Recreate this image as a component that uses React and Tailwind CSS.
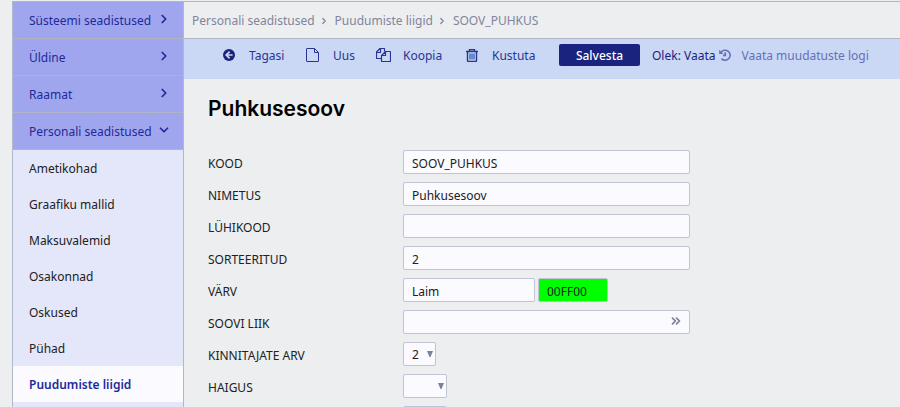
import { useState } from "react";
import { ChevronDown, ChevronRight, ChevronsRight } from "lucide-react";

const groups = [
  { label: "Süsteemi seadistused", open: false },
  { label: "Üldine", open: false },
  { label: "Raamat", open: false },
  { label: "Personali seadistused", open: true },
];

const pages = [
  "Ametikohad",
  "Graafiku mallid",
  "Maksuvalemid",
  "Osakonnad",
  "Oskused",
  "Pühad",
  "Puudumiste liigid",
];

function BackIcon() {
  return (
    <svg viewBox="0 0 12 12" className="w-3 h-3" aria-hidden="true">
      <circle cx="6" cy="6" r="6" fill="#1a237e" />
      <path
        d="M6.600 2.600 3.200 6l3.400 3.400M3.400 6h6.200"
        fill="none"
        stroke="#cad7f5"
        strokeWidth="1.700"
      />
    </svg>
  );
}

function FileIcon() {
  return (
    <svg viewBox="0 0 13 14" className="w-[13px] h-3.5" aria-hidden="true">
      <path
        d="M.5 1Q.5.5 1 .5h7.500l4 4V13q0 .5-.5.5H1q-.5 0-.5-.5zM8.500.5v4h4"
        fill="none"
        stroke="currentColor"
        strokeLinejoin="round"
      />
    </svg>
  );
}

function CopyIcon() {
  return (
    <svg viewBox="0 0 15 14" className="w-[15px] h-3.5" aria-hidden="true">
      <path
        d="M5.500 10.500H1q-.5 0-.5-.5V4L4 .5h4q.5 0 .5.5v2.500M.5 4.500h4v-4"
        fill="none"
        stroke="currentColor"
        strokeWidth="1.200"
        strokeLinejoin="round"
      />
      <path
        d="M9.500 3.500H14q.5 0 .5.5v9q0 .5-.5.5H6q-.5 0-.5-.5V7.500zM5.500 7.500h4v-4"
        fill="none"
        stroke="currentColor"
        strokeWidth="1.200"
        strokeLinejoin="round"
      />
    </svg>
  );
}

function TrashIcon() {
  return (
    <svg viewBox="0 0 12 13" className="w-3 h-[13px]" aria-hidden="true">
      <path
        d="M0 2.500h12M3.500 2.500v-2h5v2M1.500 2.500v9q0 1 1 1h7q1 0 1-1v-9"
        fill="none"
        stroke="currentColor"
        strokeWidth="1.400"
      />
      <path
        d="M4 4.500v6M6 4.500v6M8 4.500v6"
        fill="none"
        stroke="#3d6bb8"
        strokeWidth="1.400"
      />
    </svg>
  );
}

function HistoryIcon() {
  return (
    <svg viewBox="0 0 12 12" className="w-3 h-3" aria-hidden="true">
      <path
        d="M2 3.400A5 5 0 1 1 2.500 9.600M6.300 3.200v3.200H4"
        fill="none"
        stroke="currentColor"
        strokeWidth="1.600"
      />
      <path d="M.2.700v4.300h4.300z" fill="currentColor" />
    </svg>
  );
}

function ToolButton({ icon: Icon, label, className }) {
  return (
    <button className={`flex items-center text-[#283593] ${className}`}>
      <Icon />
      <span className="pt-0.5">{label}</span>
    </button>
  );
}

function Row({ id, label, children }) {
  return (
    <div className="flex items-center h-6">
      <label htmlFor={id} className="w-[195px] pt-1 shrink-0 text-[#212121]">
        {label}
      </label>
      {children}
    </div>
  );
}

const fieldStyle =
  "h-6 px-2 pt-0.5 bg-[#fafaff] border border-[#c0c4d4] rounded-xs text-[#212121] outline-none";

function TextField({ id, label, value }) {
  return (
    <Row id={id} label={label}>
      <input id={id} defaultValue={value} className={`w-[287px] ${fieldStyle}`} />
    </Row>
  );
}

function Select({ id, value, options, width, ariaLabel }) {
  return (
    <div className={`relative ${width}`}>
      <select
        id={id}
        aria-label={ariaLabel}
        defaultValue={value}
        className={`block w-full appearance-none ${fieldStyle}`}
      >
        {options.map((option) => (
          <option key={option}>{option}</option>
        ))}
      </select>
      <svg
        viewBox="0 0 6 6"
        className="absolute right-[3px] top-[9px] w-1.5 h-1.5 pointer-events-none"
        aria-hidden="true"
      >
        <path d="M0 0h6L3.500 6h-1z" fill="#7c819c" />
      </svg>
    </div>
  );
}

export default function App() {
  const [activePage, setActivePage] = useState("Puudumiste liigid");

  return (
    <div className="flex h-screen overflow-hidden pl-3 pt-px bg-[#edeef0] text-xs font-['Noto_Sans',sans-serif]">
      {/* Sidebar */}
      <nav className="w-[172px] shrink-0 border-x border-[#b0b8cc] bg-[#e4e7fa]">
        {groups.map((group) => (
          <button
            key={group.label}
            aria-expanded={group.open}
            className="flex items-center justify-between w-full h-[37px] pl-4 pr-3 border-t border-[#b0b4c6] bg-[#a0a6ee] text-[#1f2a9a] whitespace-nowrap"
          >
            <span className="pt-0.5">{group.label}</span>
            {group.open ? (
              <ChevronDown className="w-3.5 h-3.5 -ml-2 mb-0.5 shrink-0" strokeWidth={3} />
            ) : (
              <ChevronRight className="w-3.5 h-3.5 -ml-2 mb-0.5 shrink-0" strokeWidth={3} />
            )}
          </button>
        ))}
        <ul className="border-t border-[#b0b4c6]">
          {pages.map((page) => (
            <li key={page}>
              <a
                href="#"
                onClick={() => setActivePage(page)}
                className={`flex items-center h-9 px-4 pt-0.5 ${
                  page === activePage
                    ? "bg-[#fafaff] text-[#1f2a9a] font-semibold"
                    : "text-[#212121]"
                }`}
              >
                {page}
              </a>
            </li>
          ))}
        </ul>
      </nav>

      <main className="flex-1 min-w-0">
        {/* Breadcrumb */}
        <div className="flex items-center h-[38px] px-2 pt-0.5 gap-1 border-y border-[#b0b4c6] text-[#80859c] whitespace-nowrap">
          <a href="#">Personali seadistused</a>
          <ChevronRight className="w-2.5 h-2.5 mr-0.5" strokeWidth={3} />
          <a href="#">Puudumiste liigid</a>
          <ChevronRight className="w-2.5 h-2.5 mr-0.5" strokeWidth={3} />
          <span>SOOV_PUHKUS</span>
        </div>

        {/* Toolbar */}
        <div className="flex items-start h-10 pt-[5px] pl-[39px] bg-[#cad7f5] whitespace-nowrap">
          <div className="flex items-center h-[22px]">
            <ToolButton icon={BackIcon} label="Tagasi" className="w-[83px] gap-3.5" />
            <ToolButton icon={FileIcon} label="Uus" className="w-[70px] gap-3.5" />
            <ToolButton icon={CopyIcon} label="Koopia" className="w-[90px] gap-3" />
            <ToolButton icon={TrashIcon} label="Kustuta" className="w-[93px] gap-3.5" />
            <button className="w-[81px] h-[22px] pt-0.5 rounded-xs bg-[#1a237e] text-white font-medium">
              Salvesta
            </button>
            <span className="ml-3 pt-0.5 text-[#1a237e]">Olek: Vaata</span>
            <a href="#" className="flex items-center gap-2.5 ml-1 text-[#6670b5]">
              <HistoryIcon />
              <span className="pt-0.5">Vaata muudatuste logi</span>
            </a>
          </div>
        </div>

        <form className="px-6 pt-4">
          <h1 className="h-7 mb-[27px] text-[21px] leading-7 font-semibold font-['Inter',sans-serif] text-black">
            Puhkusesoov
          </h1>
          <div className="flex flex-col gap-2">
            <TextField id="kood" label="KOOD" value="SOOV_PUHKUS" />
            <TextField id="nimetus" label="NIMETUS" value="Puhkusesoov" />
            <TextField id="lyhikood" label="LÜHIKOOD" value="" />
            <TextField id="sorteeritud" label="SORTEERITUD" value="2" />
            <Row id="varv" label="VÄRV">
              <input id="varv" defaultValue="Laim" className={`w-[132px] ${fieldStyle}`} />
              <input
                aria-label="Värvi kood"
                defaultValue="00FF00"
                className="w-[70px] h-6 ml-[3px] px-2 pt-0.5 bg-[#00ff00] border border-[#c0c4d4] rounded-xs text-[#212121] outline-none"
              />
            </Row>
            <Row id="sooviliik" label="SOOVI LIIK">
              <div className="relative w-[287px]">
                <input id="sooviliik" className={`block w-full ${fieldStyle}`} />
                <button
                  type="button"
                  aria-label="Vali soovi liik"
                  className="absolute right-[7px] top-1 text-[#7c819c]"
                >
                  <ChevronsRight className="w-3.5 h-3.5" strokeWidth={3} />
                </button>
              </div>
            </Row>
            <Row id="kinnitajad" label="KINNITAJATE ARV">
              <Select id="kinnitajad" value="2" options={["1", "2", "3"]} width="w-[33px]" />
            </Row>
            <Row id="haigus" label="HAIGUS">
              <Select id="haigus" value="" options={["", "Jah"]} width="w-11" />
            </Row>
            <Row id="puhkus">
              <Select id="puhkus" ariaLabel="Puhkus" value="" options={["", "Jah"]} width="w-11" />
            </Row>
          </div>
        </form>
      </main>
    </div>
  );
}
